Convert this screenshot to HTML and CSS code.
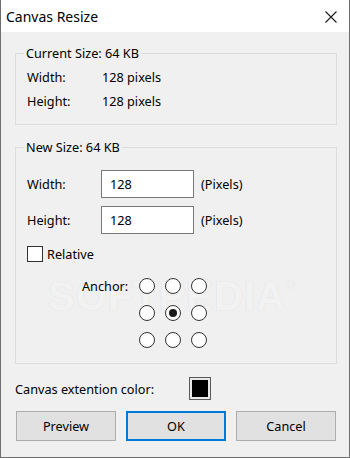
FILE: index.html
```html
<!DOCTYPE html>
<html>
<head>
<meta charset="utf-8">
<link rel="stylesheet" href="styles.css">
</head>
<body>
<div class="window">
  <div class="titlebar">
    <span class="title">Canvas Resize</span>
    <svg class="close" width="12" height="12" viewBox="0 0 12 12"><path d="M0.5 0.5 L11.5 11.5 M11.5 0.5 L0.5 11.5" stroke="#1a1a1a" stroke-width="1.1" fill="none"/></svg>
  </div>
  <div class="content">
    <fieldset class="group group-current">
      <legend>Current Size: 64 KB</legend>
      <div class="info-row"><span class="lbl">Width:</span><span>128 pixels</span></div>
      <div class="info-row"><span class="lbl">Height:</span><span>128 pixels</span></div>
    </fieldset>
    <fieldset class="group group-new">
      <legend>New Size: 64 KB</legend>
      <div class="watermark" aria-hidden="true">SOFTPEDIA<sup>®</sup></div>
      <div class="input-row"><span class="lbl2">Width:</span><div class="field">128</div><span class="unit">(Pixels)</span></div>
      <div class="input-row"><span class="lbl2">Height:</span><div class="field">128</div><span class="unit">(Pixels)</span></div>
      <div class="check-row"><span class="checkbox"></span><span>Relative</span></div>
      <div class="anchor-row">
        <span class="anchor-lbl">Anchor:</span>
        <div class="anchor-grid">
          <span class="radio"></span><span class="radio"></span><span class="radio"></span>
          <span class="radio"></span><span class="radio on"></span><span class="radio"></span>
          <span class="radio"></span><span class="radio"></span><span class="radio"></span>
        </div>
      </div>
    </fieldset>
    <div class="color-row"><span class="color-lbl">Canvas extention color:</span><span class="swatch"><span class="swatch-fill"></span></span></div>
    <div class="buttons">
      <div class="btn">Preview</div>
      <div class="btn btn-default">OK</div>
      <div class="btn">Cancel</div>
    </div>
  </div>
</div>
</body>
</html>
```
FILE: styles.css
```css
html, body {
  margin: 0;
  padding: 0;
}
body {
  width: 350px;
  height: 458px;
  overflow: hidden;
  font-family: "Noto Sans", "Open Sans", sans-serif;
  font-size: 12.7px;
  color: #000;
}
.window {
  box-sizing: border-box;
  width: 350px;
  height: 458px;
  border: 1px solid #6e6e6e;
  border-top: none;
  background: #f0f0f0;
  display: flex;
  flex-direction: column;
}
.titlebar {
  height: 32px;
  background: #fff;
  display: flex;
  align-items: center;
  justify-content: space-between;
  padding: 0 12px 0 5px;
  flex: none;
}
.title {
  font-size: 14px;
  color: #000;
}
.close {
  display: block;
  margin-top: 1px;
}
.content {
  padding: 0 12px 0 14px;
  display: flex;
  flex-direction: column;
}
.group {
  margin: 0;
  padding: 0;
  min-width: 0;
  border: 1px solid #dcdcdc;
  position: relative;
}
.group legend {
  margin-left: -3px;
  padding: 0 2px;
  line-height: 16px;
  font-size: 12.7px;
}
.group-current {
  margin-top: 13px;
  padding: 4px 0 11px 11px;
}
.info-row {
  display: flex;
  height: 24px;
  align-items: center;
}
.lbl {
  width: 75px;
}
.group-new {
  margin-top: 14px;
  padding: 15px 0 15px 11px;
}
.input-row {
  display: flex;
  align-items: center;
  height: 28px;
  margin-bottom: 8px;
  position: relative;
}
.lbl2 {
  width: 74px;
}
.field {
  box-sizing: border-box;
  width: 93px;
  height: 28px;
  border: 1px solid #7a7a7a;
  background: #fff;
  padding-left: 8px;
  line-height: 26px;
}
.unit {
  margin-left: 7px;
}
.check-row {
  display: flex;
  align-items: center;
  margin-top: 11px;
  height: 17px;
  position: relative;
}
.checkbox {
  box-sizing: border-box;
  width: 16px;
  height: 16px;
  border: 1px solid #333;
  background: #fff;
  margin-right: 4px;
}
.anchor-row {
  display: flex;
  align-items: flex-start;
  margin-top: 16px;
  margin-left: 55px;
  position: relative;
}
.anchor-lbl {
  line-height: 16px;
  width: 57px;
}
.anchor-grid {
  display: grid;
  grid-template-columns: repeat(3, 16px);
  grid-auto-rows: 16px;
  column-gap: 10px;
  row-gap: 11px;
}
.radio {
  box-sizing: border-box;
  width: 16px;
  height: 16px;
  border: 1px solid #333;
  border-radius: 50%;
  background: #fff;
  display: flex;
  align-items: center;
  justify-content: center;
}
.radio.on::after {
  content: "";
  width: 8px;
  height: 8px;
  border-radius: 50%;
  background: #1a1a1a;
}
.watermark {
  position: absolute;
  left: 32px;
  top: 119px;
  font-family: "Liberation Sans", sans-serif;
  font-weight: bold;
  font-size: 40px;
  letter-spacing: 1px;
  color: rgba(255, 255, 255, 0.7);
  text-shadow: 0 0 1px rgba(190, 190, 190, 0.5);
  pointer-events: none;
}
.watermark sup {
  font-size: 12px;
  vertical-align: top;
  position: relative;
  top: 4px;
}
.color-row {
  display: flex;
  align-items: center;
  margin-top: 13px;
  height: 23px;
}
.color-lbl {
  width: 174px;
}
.swatch {
  box-sizing: border-box;
  width: 22px;
  height: 23px;
  border: 1px solid #5a5a5a;
  background: #e8e8e8;
  padding: 2px;
  display: flex;
}
.swatch-fill {
  flex: 1;
  background: #000;
}
.buttons {
  display: flex;
  justify-content: space-between;
  margin-top: 11px;
  padding-left: 1px;
  width: 320px;
}
.btn {
  box-sizing: border-box;
  width: 100px;
  height: 30px;
  border: 1px solid #adadad;
  background: #e1e1e1;
  display: flex;
  align-items: center;
  justify-content: center;
}
.btn-default {
  border: 2px solid #0078d7;
}
```
